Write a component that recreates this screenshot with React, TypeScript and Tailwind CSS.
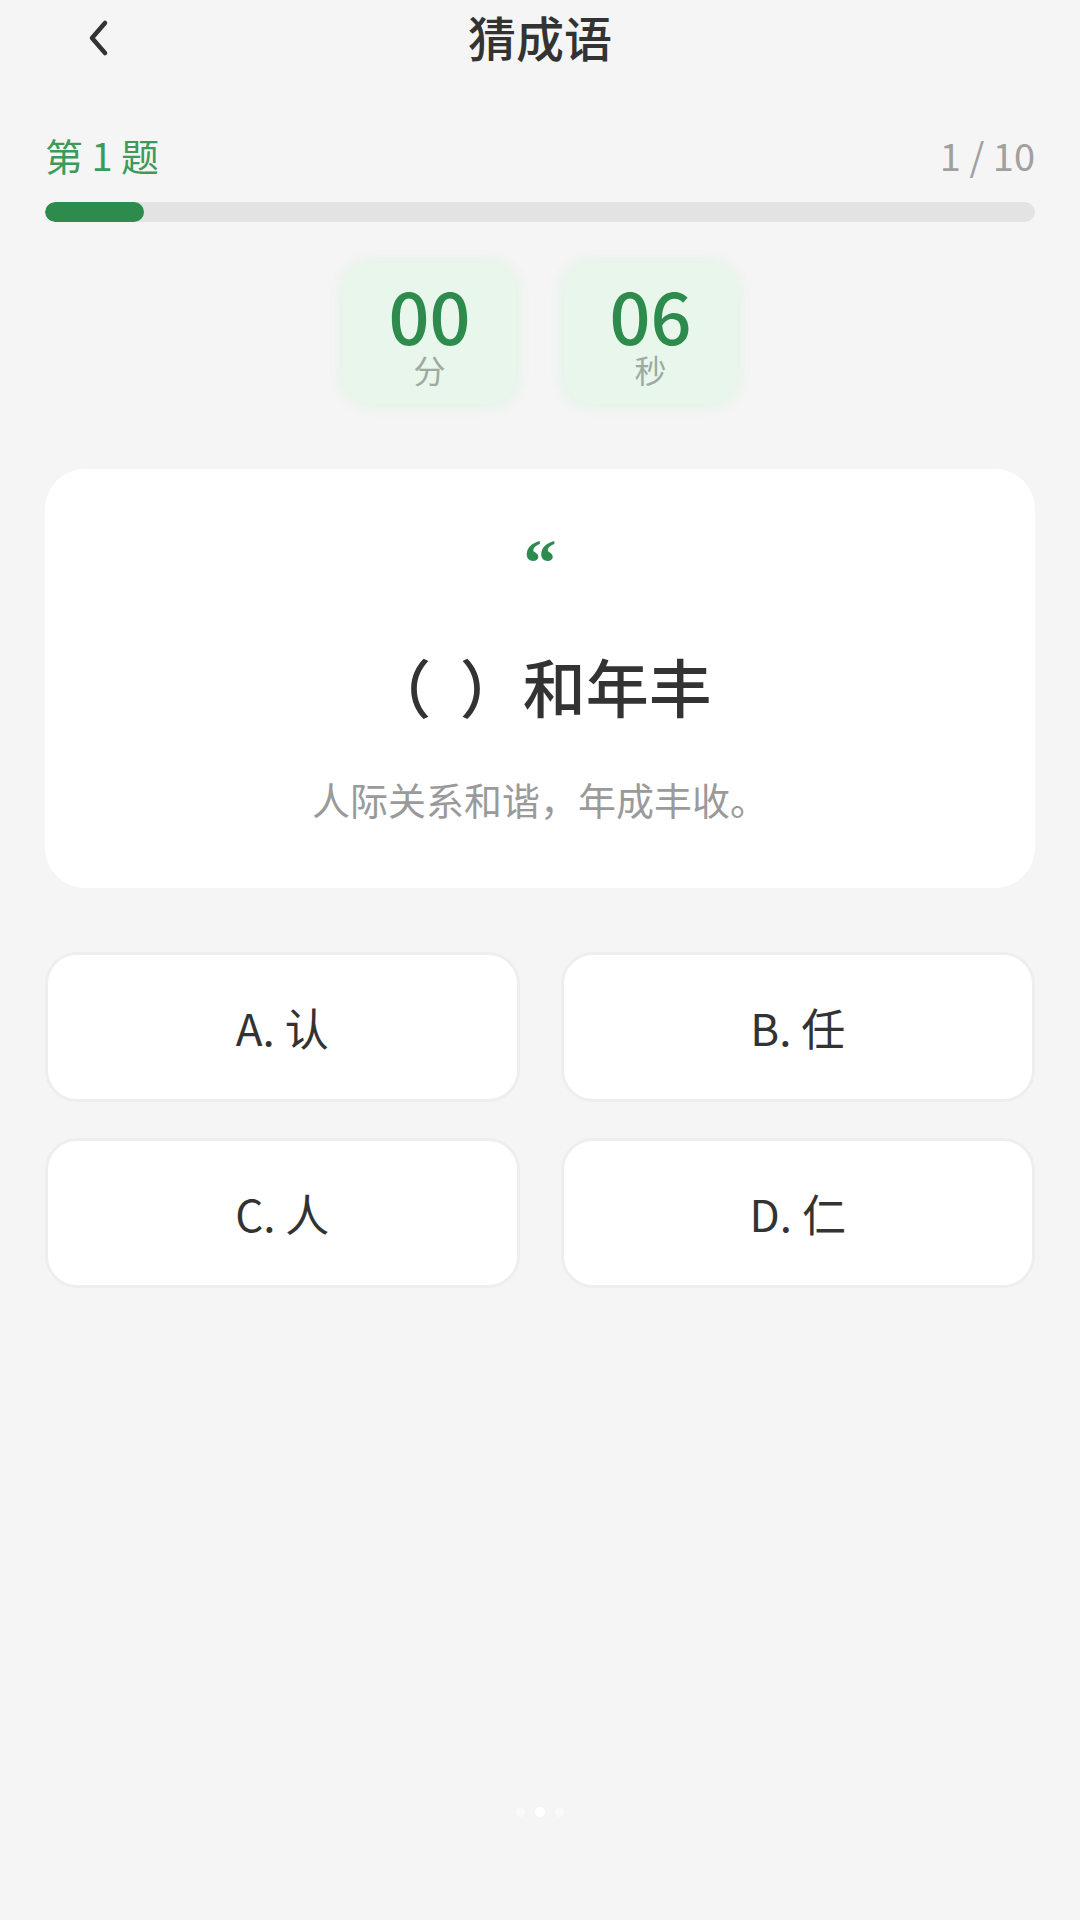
import React from 'react';

const options = ['A. 认', 'B. 任', 'C. 人', 'D. 仁'];

const App: React.FC = () => {
  return (
    <div
      className="min-h-[1920px] w-[1080px] bg-[#f5f5f5] flex flex-col text-[#333333]"
      style={{ fontFamily: '"Noto Sans CJK SC", "Noto Sans", sans-serif' }}
    >
      {/* header */}
      <div className="h-[76px] flex items-center justify-center relative">
        <button className="absolute left-[80px] top-[18px] w-[36px] h-[40px] flex items-center justify-center">
          <svg width="28" height="38" viewBox="0 0 28 38" fill="none">
            <polyline points="21,4 8,19 21,34" stroke="#333" strokeWidth="4.5" strokeLinecap="round" strokeLinejoin="round" />
          </svg>
        </button>
        <h1 className="text-[48px] leading-none font-medium mt-[-5px]">猜成语</h1>
      </div>

      {/* progress */}
      <div className="px-[45px] mt-[60px]">
        <div className="flex justify-between items-center text-[38px] leading-none">
          <span className="text-[#3d9a5b]">第 1 题</span>
          <span className="text-[#a0a0a0]">1 / 10</span>
        </div>
        <div className="mt-[28px] h-[20px] rounded-full bg-[#e3e3e3] overflow-hidden">
          <div className="h-full w-[10%] rounded-full bg-[#2e8b4e]" />
        </div>
      </div>

      {/* timer */}
      <div className="mt-[41px] flex justify-center gap-[48px]">
        {[
          ['00', '分'],
          ['06', '秒'],
        ].map(([v, l]) => (
          <div
            key={l}
            className="w-[173px] h-[141px] rounded-[28px] bg-[#e9f6eb] shadow-[0_0_16px_rgba(218,242,222,0.95)] flex flex-col items-center pt-[13px]"
          >
            <span className="text-[72px] leading-[76px] font-medium text-[#2e8b4e]">{v}</span>
            <span className="text-[32px] leading-[34px] text-[#9cab9f]">{l}</span>
          </div>
        ))}
      </div>

      {/* question card */}
      <div className="mx-[45px] mt-[65px] bg-white rounded-[40px] flex flex-col items-center pt-[64px] pb-[70px]">
        <span
          className="text-[66px] leading-[60px] font-bold text-[#2e8b4e]"
          style={{ fontFamily: '"Liberation Serif", serif' }}
        >
          “
        </span>
        <div className="mt-[60px] text-[63px] leading-none font-medium text-[#333]">（&nbsp;&nbsp;）和年丰</div>
        <div className="mt-[64px] text-[38px] leading-none text-[#9a9a9a]">人际关系和谐，年成丰收。</div>
      </div>

      {/* options */}
      <div className="mx-[45px] mt-[64px] grid grid-cols-2 gap-x-[41px] gap-y-[36px]">
        {options.map((o) => (
          <button
            key={o}
            className="h-[150px] rounded-[32px] bg-white border-[3px] border-[#eeeeee] flex items-center justify-center text-[44px] text-[#333]"
          >
            {o}
          </button>
        ))}
      </div>

      {/* page dots */}
      <div className="mt-auto mb-[103px] flex justify-center items-center gap-[10px]">
        <span className="w-[9px] h-[9px] rounded-full bg-[#fafafa]" />
        <span className="w-[10px] h-[10px] rounded-full bg-white" />
        <span className="w-[9px] h-[9px] rounded-full bg-[#fafafa]" />
      </div>
    </div>
  );
};

export default App;
